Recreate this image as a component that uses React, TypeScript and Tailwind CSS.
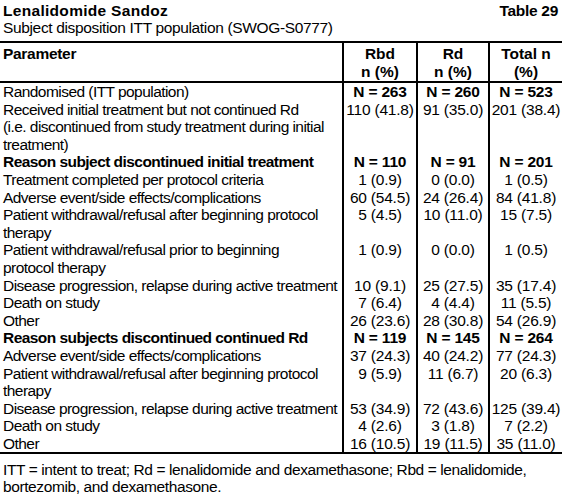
import React from "react";

type Row = {
  label: string[];
  bold?: boolean;
  v: [string, string, string];
};

const rows: Row[] = [
  { label: ["Randomised (ITT population)"], v: ["N = 263", "N = 260", "N = 523"] },
  {
    label: [
      "Received initial treatment but not continued Rd",
      "(i.e. discontinued from study treatment during initial",
      "treatment)",
    ],
    v: ["110 (41.8)", "91 (35.0)", "201 (38.4)"],
  },
  { label: ["Reason subject discontinued initial treatment"], bold: true, v: ["N = 110", "N = 91", "N = 201"] },
  { label: ["Treatment completed per protocol criteria"], v: ["1 (0.9)", "0 (0.0)", "1 (0.5)"] },
  { label: ["Adverse event/side effects/complications"], v: ["60 (54.5)", "24 (26.4)", "84 (41.8)"] },
  { label: ["Patient withdrawal/refusal after beginning protocol", "therapy"], v: ["5 (4.5)", "10 (11.0)", "15 (7.5)"] },
  { label: ["Patient withdrawal/refusal prior to beginning", "protocol therapy"], v: ["1 (0.9)", "0 (0.0)", "1 (0.5)"] },
  { label: ["Disease progression, relapse during active treatment"], v: ["10 (9.1)", "25 (27.5)", "35 (17.4)"] },
  { label: ["Death on study"], v: ["7 (6.4)", "4 (4.4)", "11 (5.5)"] },
  { label: ["Other"], v: ["26 (23.6)", "28 (30.8)", "54 (26.9)"] },
  { label: ["Reason subjects discontinued continued Rd"], bold: true, v: ["N = 119", "N = 145", "N = 264"] },
  { label: ["Adverse event/side effects/complications"], v: ["37 (24.3)", "40 (24.2)", "77 (24.3)"] },
  { label: ["Patient withdrawal/refusal after beginning protocol", "therapy"], v: ["9 (5.9)", "11 (6.7)", "20 (6.3)"] },
  { label: ["Disease progression, relapse during active treatment"], v: ["53 (34.9)", "72 (43.6)", "125 (39.4)"] },
  { label: ["Death on study"], v: ["4 (2.6)", "3 (1.8)", "7 (2.2)"] },
  { label: ["Other"], v: ["16 (10.5)", "19 (11.5)", "35 (11.0)"] },
];

const isN = (v: string) => v.startsWith("N =");

export default function App() {
  return (
    <div
      className="w-[562px] h-[495px] bg-white text-black overflow-hidden text-[15.5px] leading-[17px]"
      style={{ fontFamily: '"Liberation Sans", Arial, sans-serif' }}
    >
      <div className="flex justify-between items-start pt-[2px] pl-[3px] pr-[4px]">
        <div className="font-bold tracking-[0.3px]">Lenalidomide Sandoz</div>
        <div className="font-bold tracking-[-0.3px]">Table 29</div>
      </div>
      <div className="pl-[3px] tracking-[-0.35px]">Subject disposition ITT population (SWOG-S0777)</div>
      <div className="mt-[5px] border-t-2 border-black">
        <div className="grid grid-cols-[342px_74px_72px_74px] border-b-2 border-black font-bold leading-[18px]">
          <div className="pl-[3px] pt-[2px] tracking-[-0.3px]">Parameter</div>
          <div className="border-l-2 border-black text-center pt-[2px]">
            Rbd
            <br />
            n (%)
          </div>
          <div className="border-l-2 border-black text-center pt-[2px]">
            Rd
            <br />
            n (%)
          </div>
          <div className="border-l-2 border-black text-center pt-[2px]">
            Total n
            <br />
            (%)
          </div>
        </div>
        <div className="grid grid-cols-[342px_74px_72px_74px] border-b-2 border-black leading-[17.6px]">
          {rows.map((r, i) => (
            <React.Fragment key={i}>
              <div className={`pl-[3px] whitespace-nowrap ${r.bold ? "font-bold tracking-[-0.55px]" : "tracking-[-0.55px]"}`}>
                {r.label.map((l, j) => (
                  <div key={j}>{l}</div>
                ))}
              </div>
              {r.v.map((val, k) => (
                <div
                  key={k}
                  className={`border-l-2 border-black text-center whitespace-nowrap tracking-[-0.2px] ${isN(val) ? "font-bold" : ""}`}
                >
                  {val}
                </div>
              ))}
            </React.Fragment>
          ))}
        </div>
      </div>
      <div className="pl-[3px] pt-[7px] leading-[17px] tracking-[-0.4px]">
        ITT = intent to treat; Rd = lenalidomide and dexamethasone; Rbd = lenalidomide,
        <br />
        bortezomib, and dexamethasone.
      </div>
    </div>
  );
}
